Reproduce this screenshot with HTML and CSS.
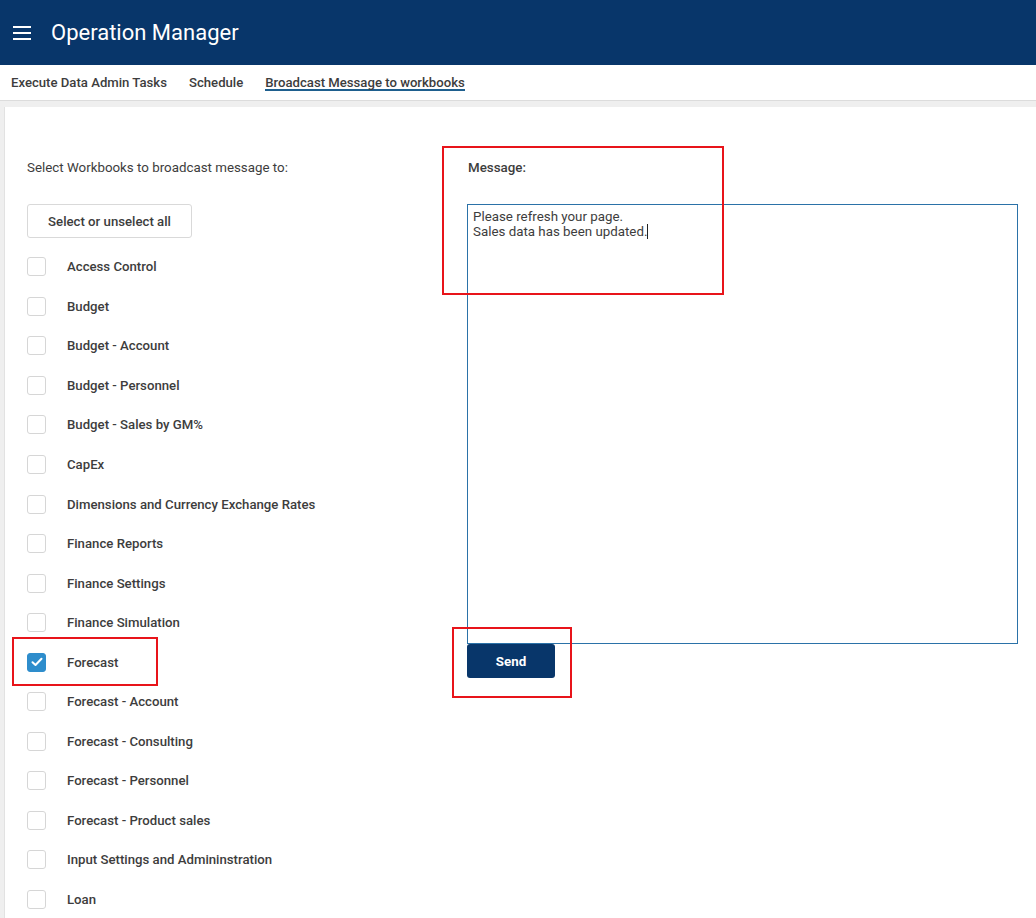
FILE: index.html
```html
<!DOCTYPE html>
<html>
<head>
<meta charset="utf-8">
<link rel="stylesheet" href="styles.css">
</head>
<body>
<header class="topbar">
  <svg class="menu-icon" width="18" height="14" viewBox="0 0 18 14"><rect x="0" y="0" width="18" height="2" fill="#fff"/><rect x="0" y="6" width="18" height="2" fill="#fff"/><rect x="0" y="12" width="18" height="2" fill="#fff"/></svg>
  <h1 class="title">Operation Manager</h1>
</header>
<nav class="tabs">
  <span class="tab">Execute Data Admin Tasks</span>
  <span class="tab">Schedule</span>
  <span class="tab active">Broadcast Message to workbooks</span>
</nav>
<div class="page">
  <main class="panel">
    <section class="left">
      <div class="heading">Select Workbooks to broadcast message to:</div>
      <button class="btn-select">Select or unselect all</button>
      <ul class="list">
        <li class="row"><span class="cb"></span><span class="lbl">Access Control</span></li>
        <li class="row"><span class="cb"></span><span class="lbl">Budget</span></li>
        <li class="row"><span class="cb"></span><span class="lbl">Budget - Account</span></li>
        <li class="row"><span class="cb"></span><span class="lbl">Budget - Personnel</span></li>
        <li class="row"><span class="cb"></span><span class="lbl">Budget - Sales by GM%</span></li>
        <li class="row"><span class="cb"></span><span class="lbl">CapEx</span></li>
        <li class="row"><span class="cb"></span><span class="lbl">Dimensions and Currency Exchange Rates</span></li>
        <li class="row"><span class="cb"></span><span class="lbl">Finance Reports</span></li>
        <li class="row"><span class="cb"></span><span class="lbl">Finance Settings</span></li>
        <li class="row"><span class="cb"></span><span class="lbl">Finance Simulation</span></li>
        <li class="row"><span class="cb checked"><svg width="12" height="10" viewBox="0 0 12 10"><path d="M1.5 5.2 L4.5 8 L10.5 1.8" fill="none" stroke="#fff" stroke-width="2" stroke-linecap="round" stroke-linejoin="round"/></svg></span><span class="lbl">Forecast</span></li>
        <li class="row"><span class="cb"></span><span class="lbl">Forecast - Account</span></li>
        <li class="row"><span class="cb"></span><span class="lbl">Forecast - Consulting</span></li>
        <li class="row"><span class="cb"></span><span class="lbl">Forecast - Personnel</span></li>
        <li class="row"><span class="cb"></span><span class="lbl">Forecast - Product sales</span></li>
        <li class="row"><span class="cb"></span><span class="lbl">Input Settings and Admininstration</span></li>
        <li class="row"><span class="cb"></span><span class="lbl">Loan</span></li>
      </ul>
    </section>
    <section class="right">
      <div class="heading">Message:</div>
      <div class="msgbox">Please refresh your page.<br>Sales data has been updated.<span class="caret"></span></div>
      <button class="btn-send">Send</button>
    </section>
  </main>
</div>
<div class="mark mark-msg"></div>
<div class="mark mark-fc"></div>
<div class="mark mark-send"></div>
</body>
</html>
```
FILE: styles.css
```css
* { box-sizing: border-box; }
html, body { margin: 0; padding: 0; }
body {
  font-family: Roboto, "Liberation Sans", Arial, sans-serif;
  color: #333;
  background: #fff;
  width: 1036px;
  height: 918px;
  overflow: hidden;
  position: relative;
}
.topbar {
  height: 65px;
  background: #08366a;
  display: flex;
  align-items: center;
  padding-left: 13px;
}
.menu-icon { display: block; }
.title {
  margin: 0 0 0 20px;
  font-size: 22px;
  font-weight: 400;
  color: #fff;
}
.tabs {
  height: 36px;
  display: flex;
  gap: 22px;
  padding-left: 11px;
  border-bottom: 1px solid #dcdcdc;
  background: #fff;
}
.tab {
  font-size: 13.15px;
  font-weight: 500;
  color: #3d3d3d;
  padding-top: 10px;
  height: 26px;
}
.tab.active {
  border-bottom: 2px solid #1e5f8e;
}
.page {
  background: #efefef;
  padding: 6px 0 0 4px;
  height: 817px;
}
.panel {
  background: #fff;
  border-left: 1px solid #e2e2e2;
  height: 100%;
  display: flex;
  padding: 53px 0 0 22px;
}
.left { width: 440px; }
.right { width: 551px; }
.heading {
  font-size: 13.33px;
  font-weight: 500;
  line-height: 15px;
  height: 15px;
  color: #3d3d3d;
}
.left .heading { font-weight: 400; }
.right .heading { padding-left: 1px; }
.btn-select {
  margin-top: 29px;
  display: block;
  width: 165px;
  height: 34px;
  background: #fff;
  border: 1px solid #d9d9d9;
  border-radius: 3px;
  font-family: inherit;
  font-size: 13.2px;
  font-weight: 500;
  color: #3d3d3d;
}
.list {
  list-style: none;
  margin: 9px 0 0 0;
  padding: 0;
}
.row {
  height: 39.55px;
  display: flex;
  align-items: center;
}
.cb {
  width: 19px;
  height: 19px;
  border: 1px solid #d6d6d6;
  border-radius: 3px;
  background: #fff;
  display: flex;
  align-items: center;
  justify-content: center;
  flex: none;
}
.cb.checked {
  background: #2e8dcc;
  border-color: #2e8dcc;
}
.lbl {
  margin-left: 21px;
  font-size: 13.2px;
  font-weight: 500;
  color: #3d3d3d;
}
.msgbox {
  margin-top: 29px;
  width: 551px;
  height: 440px;
  border: 1px solid #2b72a8;
  padding: 4px 5px;
  font-size: 13.33px;
  line-height: 15px;
  color: #3d3d3d;
}
.caret {
  display: inline-block;
  width: 1px;
  height: 15px;
  background: #222;
  vertical-align: top;
}
.btn-send {
  display: block;
  width: 88px;
  height: 34px;
  background: #08366a;
  border: none;
  border-radius: 3px;
  color: #fff;
  font-family: inherit;
  font-size: 13.33px;
  font-weight: 700;
}
.mark {
  position: absolute;
  border: 2px solid #e8141a;
  pointer-events: none;
}
.mark-msg { left: 442px; top: 146px; width: 282px; height: 149px; }
.mark-fc { left: 12px; top: 637px; width: 146px; height: 49px; }
.mark-send { left: 452px; top: 627px; width: 120px; height: 71px; }
```
